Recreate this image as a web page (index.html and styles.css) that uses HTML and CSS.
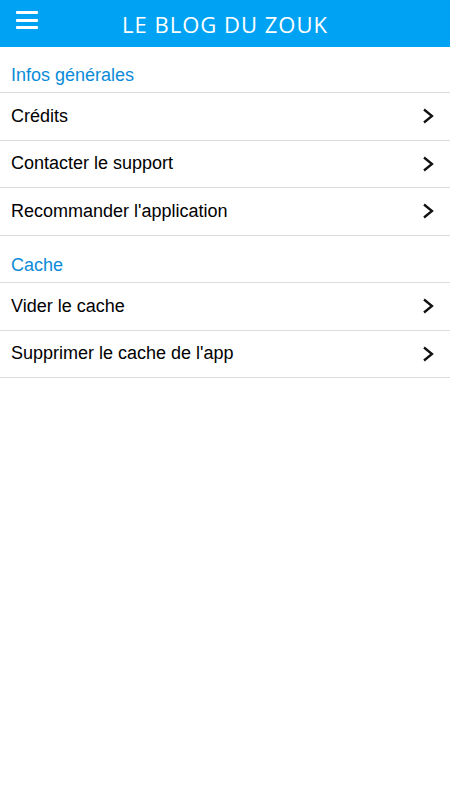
FILE: index.html
```html
<!DOCTYPE html>
<html lang="fr">
<head>
    <meta charset="UTF-8">
    <title>Le Blog du Zouk</title>
    <link rel="stylesheet" href="styles.css">
</head>
<body>
<div class="bar">
    <span class="menu"><i></i><i></i><i></i></span>
    <h1>LE BLOG DU ZOUK</h1>
</div>
<div class="list">
    <div class="title">Infos générales</div>
    <a class="row" href="javascript:;">Crédits<svg viewBox="0 0 12 16"><path d="M2 1.5 L10 8 L2 14.5"/></svg></a>
    <a class="row" href="javascript:;">Contacter le support<svg viewBox="0 0 12 16"><path d="M2 1.5 L10 8 L2 14.5"/></svg></a>
    <a class="row" href="javascript:;">Recommander l'application<svg viewBox="0 0 12 16"><path d="M2 1.5 L10 8 L2 14.5"/></svg></a>
    <div class="title second">Cache</div>
    <a class="row" href="javascript:;">Vider le cache<svg viewBox="0 0 12 16"><path d="M2 1.5 L10 8 L2 14.5"/></svg></a>
    <a class="row" href="javascript:;">Supprimer le cache de l'app<svg viewBox="0 0 12 16"><path d="M2 1.5 L10 8 L2 14.5"/></svg></a>
</div>
</body>
</html>
```
FILE: styles.css
```css
html,body{
    height: 100%;
}
*{
    margin:0;
    padding:0;
    box-sizing: border-box;
}
body{
    background: #fff;
    font-family: "Liberation Sans", Arial, sans-serif;
}
a{
    text-decoration: none;
    color: #000;
}
.bar{
    height: 47px;
    background: #00a3f4;
    display: flex;
    align-items: center;
    justify-content: center;
    position: relative;
}
.bar h1{
    color: #fff;
    font-family: "Open Sans", sans-serif;
    font-weight: 500;
    font-size: 22px;
    letter-spacing: 1px;
}
.menu{
    position: absolute;
    left: 16px;
    top: 11px;
    width: 22px;
    display: flex;
    flex-direction: column;
    gap: 4.5px;
}
.menu i{
    display: block;
    height: 3px;
    background: #fff;
    border-radius: 1px;
}
.title{
    height: 46px;
    display: flex;
    align-items: flex-end;
    padding: 0 11px 6px;
    color: #0b8bd8;
    font-size: 18px;
    border-bottom: 1px solid #dcdcdc;
}
.title.second{
    height: 47.5px;
}
.row{
    height: 47.5px;
    display: flex;
    align-items: center;
    justify-content: space-between;
    padding: 0 16px 0 11px;
    font-size: 18px;
    border-bottom: 1px solid #dcdcdc;
}
.row svg{
    width: 12px;
    height: 16px;
    fill: none;
    stroke: #111;
    stroke-width: 2.3;
}
```
